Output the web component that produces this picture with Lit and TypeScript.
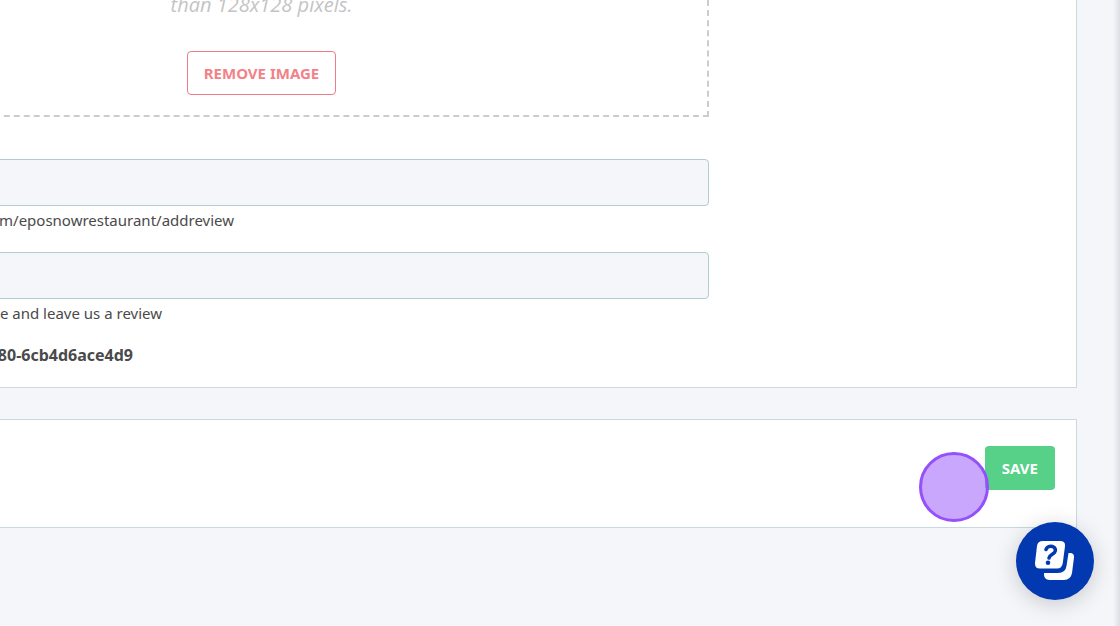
import { LitElement, html, css } from "lit";
import { customElement } from "lit/decorators.js";

@customElement("app-root")
export class AppRoot extends LitElement {
  static styles = css`
    :host {
      display: block;
      position: relative;
      min-height: 100vh;
      overflow: hidden;
      background: #f4f6fa;
      color: #4a4a4a;
      font-family: "Noto Sans", "Open Sans", sans-serif;
      font-size: 15px;
      line-height: 24px;
    }
    * {
      box-sizing: border-box;
    }
    .page {
      display: flex;
      flex-direction: column;
      gap: 31px;
      margin-right: 43px;
    }
    .panel {
      background: #fff;
      border: 1px solid #c8dadf;
      border-left: 0;
    }
    .details {
      border-top: 0;
      padding-bottom: 20px;
    }
    .form {
      width: 895px;
      margin-left: -186px;
    }
    .dropzone {
      display: flex;
      flex-direction: column;
      align-items: center;
      gap: 34px;
      height: 117px;
      padding-bottom: 20px;
      justify-content: flex-end;
      border: 2px dashed #cccccc;
      border-top: 0;
      margin-bottom: 42px;
    }
    .note {
      margin: 0;
      color: #c4c4c4;
      font-family: "Open Sans", "Noto Sans", sans-serif;
      font-size: 20px;
      font-style: italic;
    }
    button {
      flex-shrink: 0;
      height: 44px;
      padding: 0 16px;
      border: 1px solid transparent;
      border-radius: 4px;
      font: inherit;
      font-weight: 700;
      cursor: pointer;
    }
    .remove {
      background: #fff;
      border-color: #ee7c84;
      color: #f28287;
    }
    .save {
      background: #57d088;
      color: #fff;
    }
    .field {
      display: block;
      width: 100%;
      height: 47px;
      padding: 0 16px;
      border: 1px solid #b3cbd3;
      border-radius: 4px;
      background: #f4f6fa;
      font: inherit;
    }
    .hint {
      display: flex;
      justify-content: flex-end;
      margin: 2px 0 20px;
      white-space: nowrap;
    }
    .url {
      width: 420px;
    }
    .message {
      width: 348px;
      margin-bottom: 18px;
    }
    .code {
      width: 319px;
      margin: 0;
      font-size: 16px;
      font-weight: 700;
    }
    .actions {
      display: flex;
      justify-content: flex-end;
      align-items: flex-start;
      padding: 26px 21px 37px;
    }
    .pointer {
      position: absolute;
      left: 919px;
      top: 452px;
      width: 70px;
      height: 70px;
      border: 3px solid #9450fb;
      border-radius: 50%;
      background: rgba(148, 80, 251, 0.5);
      pointer-events: none;
    }
    .help {
      position: absolute;
      right: 26px;
      bottom: 26px;
      width: 78px;
      height: 78px;
      padding: 0;
      border: 0;
      border-radius: 50%;
      background: #0339b0;
      box-shadow: 0 4px 22px rgba(0, 0, 0, 0.18);
    }
    .help svg {
      display: block;
      width: 78px;
      height: 78px;
    }
    .edge {
      position: absolute;
      top: 0;
      right: 0;
      bottom: 0;
      width: 7px;
      background: linear-gradient(to right, rgba(90, 95, 110, 0), rgba(90, 95, 110, 0.16));
    }
  `;

  render() {
    return html`
      <main class="page">
        <section class="panel details">
          <div class="form">
            <div class="dropzone">
              <p class="note">than 128x128 pixels.</p>
              <button class="remove" type="button">REMOVE IMAGE</button>
            </div>
            <input class="field" type="text" aria-labelledby="url-hint" />
            <p class="hint url" id="url-hint">m/eposnowrestaurant/addreview</p>
            <input class="field" type="text" aria-labelledby="message-hint" />
            <p class="hint message" id="message-hint">e and leave us a review</p>
            <p class="hint code">80-6cb4d6ace4d9</p>
          </div>
        </section>
        <section class="panel actions">
          <button class="save" type="button">SAVE</button>
        </section>
      </main>
      <div class="edge"></div>
      <div class="pointer"></div>
      <button class="help" type="button" aria-label="Help">
        <svg viewBox="1 1 78 78" aria-hidden="true">
          <path
            fill="#fff"
            d="M28 20H45Q50.500 20 50 25L47.800 42Q47 47.500 42 47.500H25Q19.500 47.500 20 42L22 25Q22.600 20 28 20Z"
          />
          <path
            fill="#fff"
            d="M53.500 32H55Q59.500 32 59 36.500L57 52Q55.700 59 49 59H34.500Q28.500 59 29 52H43Q50.500 52 51.500 45L53.500 32Z"
          />
          <path
            fill="none"
            stroke="#0339b0"
            stroke-width="3.600"
            stroke-linecap="round"
            stroke-linejoin="round"
            d="M31 28.500C32 25.400 35 24.800 37.500 25.500C40.500 26.400 41.200 29.300 39.500 31.500C38 33.400 34.500 33.800 34 37"
          />
          <circle cx="33" cy="41.800" r="2.300" fill="#0339b0" />
        </svg>
      </button>
    `;
  }
}
